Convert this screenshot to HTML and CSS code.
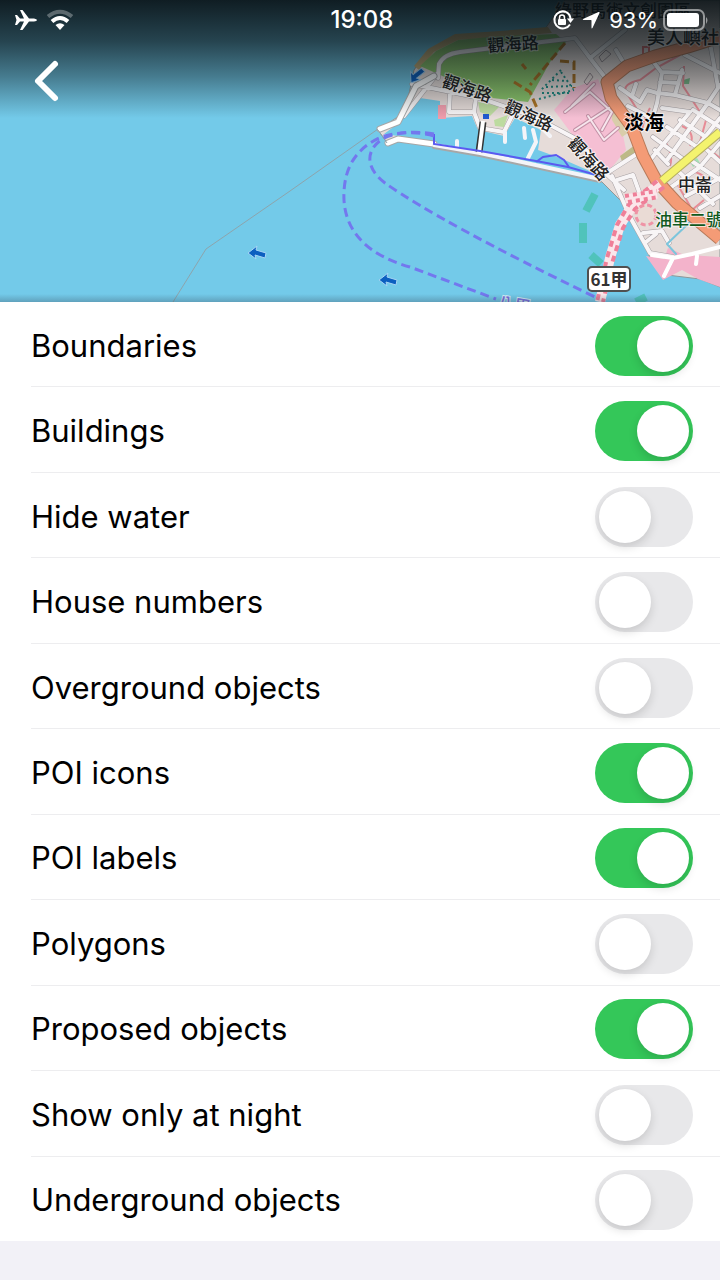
FILE: index.html
```html
<!DOCTYPE html>
<html lang="en">
<head>
<meta charset="utf-8">
<meta name="viewport" content="width=device-width, initial-scale=1">
<title>Map details</title>
<link rel="stylesheet" href="styles.css">
</head>
<body>
<div class="screen">
  <header class="hero">
    <svg class="map" viewBox="0 0 720 302" preserveAspectRatio="xMaxYMin slice" role="img" aria-label="Map">
      <defs>
        <linearGradient id="shade" x1="0" y1="0" x2="0" y2="1">
          <stop offset="0" stop-color="#081014" stop-opacity=".93"/>
          <stop offset=".35" stop-color="#081014" stop-opacity=".72"/>
          <stop offset=".65" stop-color="#081014" stop-opacity=".42"/>
          <stop offset="1" stop-color="#081014" stop-opacity="0"/>
        </linearGradient>
        <linearGradient id="edge" x1="0" y1="0" x2="0" y2="1">
          <stop offset="0" stop-color="#345" stop-opacity="0"/>
          <stop offset="1" stop-color="#345" stop-opacity=".3"/>
        </linearGradient>
        <path id="arrow" d="M-9-1 0-8-1-4 9-1 8 4-2 1-1 5Z" fill="#0c5fc0" stroke="#a5d5f5" stroke-width="1"/>
        <path id="streets" d="M438 78 439 64Q444 54 460 52L500 47 575 38 590 58 604 76M590 58 625 30M437 74 404 116M412 84 480 98 535 117 578 140 604 172 624 190M450 92 449 112H474L476 98M474 112 480 128 504 132 514 112M685 55 720 73M710 43 718 87M652 60 662 73 657 103 653 117M662 72 683 73M660 82 678 83M682 70 675 95 708 103M658 93 675 95M620 88 640 102 647 90 657 93M632 96 636 84M662 108 690 112M720 85 708 103 667 160M708 103 720 110M693 110 720 127M650 160 690 112M653 137 687 162M667 127 697 147M680 120 706 137M720 118 687 160M628 106 655 120M707 150 720 162M677 170 713 204M690 160 720 180M667 190 700 167 720 143M686 196 720 178M700 208 720 196M607 173 643 150M617 180 633 175 641 197M612 176 630 217 650 253 673 257M643 233 662 231 669 243M646 242 656 234M622 60 616 50M655 150 668 164"/>
        <path id="lanes" d="M565 112 590 92 612 112 602 130M575 130 612 106M594 84 572 106M588 116 604 140 618 128"/>
        <path id="motorway" d="M720 37 688 47 655 56 627 66 607 82 611 98 632 127 643 156 656 180 677 203 720 239"/>
      </defs>
      <rect width="720" height="302" fill="#73cae9"/>
      <!-- land -->
      <path d="M378 130 402 114 409 94 414 70 428 50 455 36 500 32 545 29 565 0H720V287L700 279 667 275 650 258 640 232 622 202 600 180 540 166 434 146 398 138 388 144 378 130Z" fill="#e6dcd9" stroke="#8e9899" stroke-width="1"/>
      <path d="M414 66 428 49 455 34 500 31 548 27 552 33 500 37 458 40 434 52 419 70Z" fill="#c7b07a"/>
      <!-- harbour basin -->
      <path d="M400 122 407 113 420 98 440 101 440 118 472 116 478 130 504 136 515 118 541 130 538 150 560 158 592 172 600 179 540 165 480 152 434 144 398 136 384 134Z" fill="#73cae9"/>
      <path d="M420 66 436 51 458 40 500 36 556 34 566 42 550 62 528 102 492 98 438 74Z" fill="#8cc66c"/>
      <path d="M478 102 500 106 490 116 480 112ZM494 120 508 115 504 127 495 126Z" fill="#bddba0"/>
      <!-- built-up blocks -->
      <path d="M598 79 606 98 618 110 626 150 608 172 580 145 554 110 573 88Z" fill="#f5bfd3"/>
      <path d="M610 103 620 108 632 130 622 137 612 120Z" fill="#d9cdaa"/>
      <path d="M620 156 635 145 640 153 623 164Z" fill="#bdb987"/>
      <path d="M646 256 664 259 668 248 682 254 704 256 720 257V287L698 279 682 270 663 280Z" fill="#f3b3cb"/>
      <path d="M438 105H446V119H438Z" fill="#ef9dac"/>
      <path d="M690 162 697 158 700 163 693 167Z" fill="#a3e2b5"/>
      <path d="M683 80 690 78 689 84 683 84Z" fill="#7dbb8a"/>
      <path d="M643 47H649V54H643Z" fill="none" stroke="#d96f6f" stroke-width="2"/>
      <path d="M599 57 606 50 611 54 602 62ZM584 82 590 73 593 77 587 85Z" fill="none" stroke="#9a8d92"/>
      <g fill="none" stroke="#e78c96" stroke-width="2">
        <path d="M680 55 656 68 640 80Q622 84 626 92L640 114M684 66 683 86 700 112M650 108Q644 118 642 130M682 126Q696 132 690 146M706 120 700 142 720 158M664 140Q674 154 670 166M694 172Q708 174 706 190M676 182 690 206M692 210 704 200"/>
      </g>
      <!-- minor streets -->
      <g fill="none" stroke-linecap="round" stroke-linejoin="round">
        <use href="#lanes" stroke="#c492a7" stroke-width="4"/>
        <use href="#lanes" stroke="#f7e6ed" stroke-width="2"/>
        <use href="#streets" stroke="#a59fa2" stroke-width="5"/>
        <use href="#streets" stroke="#f8f5f6" stroke-width="4"/>
        <path stroke="#fff" stroke-width="4" d="M652 255 673 258 692 254 720 247M673 258 664 276M697 256 696 264"/>
        <path stroke="#7cc5dc" stroke-width="2" d="M690 222 667 244 676 254M720 227 704 232"/>
        <!-- breakwaters and piers -->
        <path stroke="#a7a7a7" stroke-width="7" d="M380 129 398 122 416 86 434 76M388 143 398 139 434 144"/>
        <path stroke="#fff" stroke-width="5" d="M380 129 398 122 416 86 434 76M388 143 398 139 434 144"/>
        <path stroke="#a7a7a7" stroke-width="4" d="M434 147 480 155 600 181"/>
        <path stroke="#f4f4f8" stroke-width="4" d="M434 145 480 153 600 179M457 141V148M505 132V142M524 128 525 138M528 158 536 142 533 130M540 126 550 136"/>
      </g>
      <path d="M483 122 479 152" stroke="#333" stroke-width="7"/>
      <path d="M483 121 479 153" stroke="#fff" stroke-width="4"/>
      <path d="M434 134V144L480 151 536 161 568 167 600 176M536 162 543 157 556 155 564 160 569 167" fill="none" stroke="#5a5af0" stroke-width="2"/>
      <!-- main roads -->
      <g fill="none" stroke-linejoin="round">
        <use href="#motorway" stroke="#b77a5a" stroke-width="13"/>
        <use href="#motorway" stroke="#f49b76" stroke-width="11"/>
        <path d="M662 181 720 132" stroke="#b5ae60" stroke-width="9"/>
        <path d="M662 181 720 132" stroke="#f4f36e" stroke-width="7"/>
        <path d="M660 184 632 206 620 225 610 258 600 302" stroke="#fbe6ea" stroke-width="10"/>
        <path d="M657 181 629 204 617 225 607 258 597 302" stroke="#ef7f98" stroke-width="4" stroke-dasharray="6 5"/>
        <path d="M664 187 635 209 623 228 613 260 603 302" stroke="#ef7f98" stroke-width="4" stroke-dasharray="6 5"/>
        <path d="M625 199 657 194" stroke="#fbe6ea" stroke-width="9"/>
        <path d="M625 196 657 191M628 202 659 197" stroke="#ef7f98" stroke-width="4" stroke-dasharray="4 4"/>
        <circle cx="646" cy="215" r="10" fill="#eadbd5" stroke="#ef93a5" stroke-width="3" stroke-dasharray="5 3"/>
      </g>
      <path d="M565 43 530 85M514 82 530 92 537 108M560 61 574 62V88M522 64 526 69" fill="none" stroke="#ac7324" stroke-width="3" stroke-dasharray="9 4"/>
      <path d="M561 70 541 90M539 99 574 90M561 72 573 89M552 80 566 81M546 87 572 86M542 93 570 93" fill="none" stroke="#208b83" stroke-width="2" stroke-dasharray="2 3"/>
      <!-- sea routes and boundary -->
      <path d="M173 302 206 249 290 191 378 129M378 130 387 143" fill="none" stroke="#8da4ac" stroke-width="1"/>
      <path d="M434 136Q408 129 381 137C355 149 345 168 344 192 342 230 367 255 410 267L496 299" fill="none" stroke="#7378ee" stroke-width="3" stroke-dasharray="9 5"/>
      <path d="M434 134Q405 129 384 138C364 150 366 169 385 183Q440 222 595 297" fill="none" stroke="#7378ee" stroke-width="3" stroke-dasharray="9 5"/>
      <path d="M595 194 586 211M583 223V243M591 255 601 264M636 302 646 297" fill="none" stroke="#50c3bb" stroke-width="8"/>
      <use href="#arrow" x="257" y="254"/>
      <use href="#arrow" x="388" y="281"/>
      <use href="#arrow" transform="translate(417 76) rotate(-55)"/>
      <path d="M483 114H489V119H483Z" fill="#205bd0"/>
      <rect x="588" y="267" width="42" height="24" rx="4" fill="#fff" stroke="#505050" stroke-width="2"/>
      <g class="map-text">
        <text x="609" y="286" text-anchor="middle" class="shield">61甲</text>
        <text x="555" y="17">綠野馬術文創園區</text>
        <text x="647" y="44" class="district">美人嶼社區</text>
        <text transform="translate(488 52) rotate(-4)">觀海路</text>
        <text transform="translate(441 86) rotate(19)">觀海路</text>
        <text transform="translate(503 111) rotate(24)">觀海路</text>
        <text transform="translate(567 144) rotate(48)">觀海路</text>
        <text x="624" y="130" class="town">淡海</text>
        <text x="678" y="191">中崙</text>
        <text x="655" y="226" class="green">油車二號</text>
        <text transform="translate(496 308) rotate(10)" class="ferry">八里</text>
      </g>
      <rect width="720" height="118" fill="url(#shade)"/>
      <rect y="294" width="720" height="8" fill="url(#edge)"/>
    </svg>
    <div class="status">
      <div class="status-left">
        <svg width="22" height="20" viewBox="0 0 22 20" aria-label="Airplane mode"><path d="M0 5H2L5 8.500H9L5 0H7.500L14 8.500H19Q22 9 22 10 22 11 19 11.500H14L7.500 20H5L9 11.500H5L2 15H0L1.500 10Z" fill="#fff"/></svg>
        <svg width="28" height="20" viewBox="0 0 28 20" aria-label="Wi-Fi"><path d="M2 6.500Q14-3 26 6.500" fill="none" stroke="#fff" stroke-opacity=".3" stroke-width="4"/><path d="M6 11.500Q14 4.500 22 11.500" fill="none" stroke="#fff" stroke-width="4"/><path d="M9.500 15Q14 11.500 18.500 15L14 20Z" fill="#fff"/></svg>
      </div>
      <time class="clock">19:08</time>
      <div class="status-right">
        <svg width="20" height="20" viewBox="0 0 20 20" aria-label="Rotation lock"><path d="M13 2A8.500 8.500 0 1 0 17 14.500" fill="none" stroke="#fff" stroke-width="2"/><path d="M13 2A8 8 0 0 1 17.500 9" fill="none" stroke="#fff" stroke-width="2"/><path d="M14 8.500H21L17.500 13Z" fill="#fff"/><rect x="5" y="9" width="8" height="6" rx="1" fill="#fff"/><path d="M6.500 9V7.500A2.500 2.500 0 0 1 11.500 7.500V9" fill="none" stroke="#fff" stroke-width="1.500"/></svg>
        <svg width="18" height="18" viewBox="0 0 18 18" aria-label="Location"><path d="M1 8 16.500 1Q18 .5 17.500 2L10.500 17Q9.500 18 9.500 16.500V9.500Q9.500 9 9 9H2Q0 9 1 8Z" fill="#fff"/></svg>
        <span class="percent">93%</span>
        <svg width="46" height="22" viewBox="0 0 46 22" aria-label="Battery"><rect x="1" y="1" width="40" height="20" rx="6" fill="none" stroke="#fff" stroke-opacity=".5" stroke-width="2"/><rect x="4" y="4" width="32" height="14" rx="3" fill="#fff"/><path d="M43 8Q46 11 43 15Z" fill="#fff" fill-opacity=".5"/></svg>
      </div>
    </div>
    <button class="back" type="button" aria-label="Back"><svg width="26" height="42" viewBox="0 0 26 42"><path d="M23 4 6 21 23 38" fill="none" stroke="#fff" stroke-width="6" stroke-linecap="round" stroke-linejoin="round"/></svg></button>
  </header>
  <main class="panel">
    <ul class="options">
      <li><label for="o1">Boundaries</label><input id="o1" type="checkbox" role="switch" class="switch" checked></li>
      <li><label for="o2">Buildings</label><input id="o2" type="checkbox" role="switch" class="switch" checked></li>
      <li><label for="o3">Hide water</label><input id="o3" type="checkbox" role="switch" class="switch"></li>
      <li><label for="o4">House numbers</label><input id="o4" type="checkbox" role="switch" class="switch"></li>
      <li><label for="o5">Overground objects</label><input id="o5" type="checkbox" role="switch" class="switch"></li>
      <li><label for="o6">POI icons</label><input id="o6" type="checkbox" role="switch" class="switch" checked></li>
      <li><label for="o7">POI labels</label><input id="o7" type="checkbox" role="switch" class="switch" checked></li>
      <li><label for="o8">Polygons</label><input id="o8" type="checkbox" role="switch" class="switch"></li>
      <li><label for="o9">Proposed objects</label><input id="o9" type="checkbox" role="switch" class="switch" checked></li>
      <li><label for="o10">Show only at night</label><input id="o10" type="checkbox" role="switch" class="switch"></li>
      <li><label for="o11">Underground objects</label><input id="o11" type="checkbox" role="switch" class="switch"></li>
    </ul>
  </main>
</div>
</body>
</html>
```
FILE: styles.css
```css
* { box-sizing: border-box; }
body {
  margin: 0;
  background: #f2f1f7;
  color: #000;
  font-family: Inter, "Liberation Sans", "Noto Sans CJK TC", sans-serif;
}
.screen {
  display: flex;
  flex-direction: column;
  min-height: 100vh;
  padding-bottom: 39px;
}
.hero {
  position: relative;
  height: 302px;
  flex: none;
  overflow: hidden;
}
.map {
  position: absolute;
  inset: 0;
  width: 100%;
  height: 100%;
}
.map-text text {
  font-family: "Noto Sans CJK TC", sans-serif;
  font-size: 17px;
  font-weight: 500;
  fill: #222;
  stroke: #ffffffb0;
  stroke-width: 2px;
  paint-order: stroke;
}
.map-text .district { font-size: 18px; }
.map-text .town { font-size: 20px; font-weight: 700; fill: #000; }
.map-text .green { fill: #0f5a1e; }
.map-text .ferry { fill: #7a6fe0; }
.map-text .shield { font-weight: 700; fill: #333; }
.status {
  position: relative;
  display: grid;
  grid-template-columns: 1fr auto 1fr;
  align-items: center;
  height: 40px;
  padding: 0 11px 0 15px;
  color: #fff;
  font-size: 22px;
  line-height: 28px;
}
.status-left, .status-right { display: flex; align-items: center; gap: 9px; }
.status-right { justify-content: flex-end; }
.status svg, .back svg { display: block; overflow: visible; }
.clock { font-size: 24px; font-weight: 500; }
.percent { margin-right: -4px; }
.back {
  position: relative;
  display: block;
  margin: 0 0 0 32px;
  padding: 20px 0;
  border: 0;
  background: none;
}
.panel {
  display: flex;
  flex: 1;
  background: #fff;
}
.options {
  display: flex;
  flex: 1;
  flex-direction: column;
  margin: 0;
  padding: 0 0 0 31px;
  list-style: none;
}
.options li {
  display: flex;
  flex: 1;
  align-items: center;
  justify-content: space-between;
  padding: 3px 27px 0 0;
  border-bottom: 1px solid #ededef;
}
.options li:last-child { border-bottom: 0; }
.options label {
  font-size: 31px;
  line-height: 40px;
}
.switch {
  appearance: none;
  flex: none;
  width: 98px;
  height: 60px;
  margin: 0;
  padding: 4px;
  border-radius: 30px;
  background: #e8e8ea;
}
.switch::before {
  content: "";
  display: block;
  width: 52px;
  height: 52px;
  border-radius: 50%;
  background: #fff;
  box-shadow: 0 4px 10px #00000024;
}
.switch:checked { background: #34c759; }
.switch:checked::before { margin-left: auto; }
```
